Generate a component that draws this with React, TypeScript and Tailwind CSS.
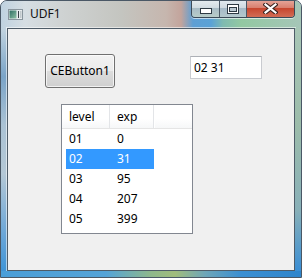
const font = { fontFamily: '"Noto Sans", "Liberation Sans", sans-serif' };

const rows = [
  { level: "01", exp: "0" },
  { level: "02", exp: "31" },
  { level: "03", exp: "95" },
  { level: "04", exp: "207" },
  { level: "05", exp: "399" },
];

function AppIcon() {
  return (
    <svg width="15" height="11" viewBox="0 0 15 11">
      <defs>
        <linearGradient id="ic" x1="0" y1="0" x2="1" y2="1">
          <stop offset="0" stopColor="#2f6f63" />
          <stop offset="1" stopColor="#8fc2a6" />
        </linearGradient>
      </defs>
      <rect x="0.5" y="0.5" width="14" height="10" fill="#e8ecee" stroke="#8a969e" />
      <rect x="1.5" y="1.5" width="7" height="8" fill="url(#ic)" />
      <rect x="10" y="2" width="1" height="7" fill="#3a4248" />
      <rect x="12" y="2" width="1.5" height="7" fill="#c0c8cc" />
    </svg>
  );
}

function CaptionButtons() {
  return (
    <div className="flex h-[18px] rounded-b-[4px] border border-t-0 border-[#3c4a58] overflow-hidden shadow-[0_1px_0_rgba(255,255,255,0.6)]">
      <div className="w-[28px] flex items-center justify-center border-r border-[#4a5866] bg-[linear-gradient(#e6ecf0_0%,#d2dce2_45%,#a9bcc6_50%,#b8ccc8_100%)]">
        <svg width="12" height="6" viewBox="0 0 12 6" className="mt-[4px]">
          <rect x="0.5" y="0.5" width="11" height="5" fill="#ffffff" stroke="#2e3a44" />
        </svg>
      </div>
      <div className="w-[27px] flex items-center justify-center border-r border-[#4a5866] bg-[linear-gradient(#e2eaf0_0%,#cfd9e0_45%,#a6bac8_50%,#b4c8cc_100%)]">
        <svg width="12" height="10" viewBox="0 0 12 10" className="mt-[1px]">
          <rect x="0.5" y="0.5" width="11" height="9" fill="#ffffff" stroke="#2e3a44" />
          <rect x="2.5" y="3.5" width="7" height="4" fill="#b9c7d0" stroke="#2e3a44" />
        </svg>
      </div>
      <div className="w-[47px] flex items-center justify-center bg-[linear-gradient(#e6a89c_0%,#d9806f_45%,#c7472f_50%,#d26c55_100%)]">
        <svg width="15" height="11" viewBox="0 0 15 11">
          <path d="M2.5 1.5 L12.5 9.5 M12.5 1.5 L2.5 9.5" stroke="#3a2420" strokeWidth="4.2" strokeLinecap="square" />
          <path d="M2.5 1.5 L12.5 9.5 M12.5 1.5 L2.5 9.5" stroke="#ffffff" strokeWidth="2.2" strokeLinecap="square" />
        </svg>
      </div>
    </div>
  );
}

export default function App() {
  return (
    <div
      className="w-[302px] h-[278px] flex flex-col rounded-t-[7px] border border-[#4a5866] overflow-hidden bg-[#b9cbd8]"
      style={font}
    >
      {/* title bar */}
      <div className="h-[27px] flex items-start pr-[6px] bg-[linear-gradient(to_right,#bfd2e0_0%,#d6dee3_8%,#cfd3d3_20%,#c4c5c0_40%,#c6b6ae_55%,#c3a49c_60%,#5e9fd4_64%,#5aa2d6_70%,#7fbab0_74%,#92c8a2_80%,#a6c6b8_100%)]">
        <div className="flex items-center h-[26px] pl-[7px] gap-[7px]">
          <AppIcon />
          <span className="text-[12px] text-[#111] leading-none">UDF1</span>
        </div>
        <div className="flex-1" />
        <div className="-mt-px">
          <CaptionButtons />
        </div>
      </div>

      {/* middle */}
      <div className="flex-1 flex">
        <div className="w-[6px] bg-[linear-gradient(#c2d4e0_0%,#7aa4c8_20%,#aac2d4_40%,#b4c8d6_60%,#6aa6d8_85%,#3f94d6_100%)]" />
        <div className="flex-1 border border-[#4e5c68] bg-[#f0f0f0] shadow-[0_0_0_1px_rgba(255,255,255,0.55)] pl-[37px] pt-[25px]">
          <div className="flex items-start">
            <div className="w-[70px] h-[34px] rounded-[3px] border border-[#707070] bg-[linear-gradient(#f2f2f2_0%,#ebebeb_50%,#dddddd_50%,#cfcfcf_100%)] shadow-[inset_0_0_0_1px_rgba(255,255,255,0.7)] flex items-center justify-center text-[12px] text-black">
              CEButton1
            </div>
            <div className="ml-[75px] mt-[2px] w-[72px] h-[23px] border border-[#c9cbd0] border-t-[#adb0b6] bg-white flex items-center pl-[3px] text-[12px] text-black">
              02 31
            </div>
          </div>

          <div className="mt-[16px] ml-[16px] w-[132px] h-[130px] border border-[#828790] bg-white text-[12px] text-black">
            <div className="h-[24px] flex border-b border-[#e5e5e5] bg-[linear-gradient(#ffffff_0%,#ffffff_60%,#f6f7f8_100%)]">
              <div className="w-[48px] pl-[7px] flex items-center border-r border-[#e3e5e8]">level</div>
              <div className="w-[44px] pl-[7px] flex items-center border-r border-[#e3e5e8] shadow-[1px_0_0_#ffffff]">exp</div>
              <div className="flex-1" />
            </div>
            {rows.map((r, i) => (
              <div
                key={r.level}
                className={
                  i === 1
                    ? "ml-[4px] w-[88px] h-[20px] flex items-center bg-[#3399ff] text-white"
                    : "ml-[4px] w-[88px] h-[20px] flex items-center"
                }
              >
                <div className="w-[44px] pl-[3px]">{r.level}</div>
                <div className="w-[44px] pl-[7px]">{r.exp}</div>
              </div>
            ))}
          </div>
        </div>
        <div className="w-[6px] bg-[linear-gradient(#a8c6b6_0%,#9cbcaa_40%,#88b0b8_75%,#3a8ed4_100%)]" />
      </div>

      {/* bottom frame */}
      <div className="h-[6px] bg-[linear-gradient(to_right,#4a9ed8_0%,#55a4d8_35%,#8eb88c_50%,#a0bc7c_58%,#6ea6b8_68%,#3b8fd2_80%,#2f86cc_100%)]" />
    </div>
  );
}
